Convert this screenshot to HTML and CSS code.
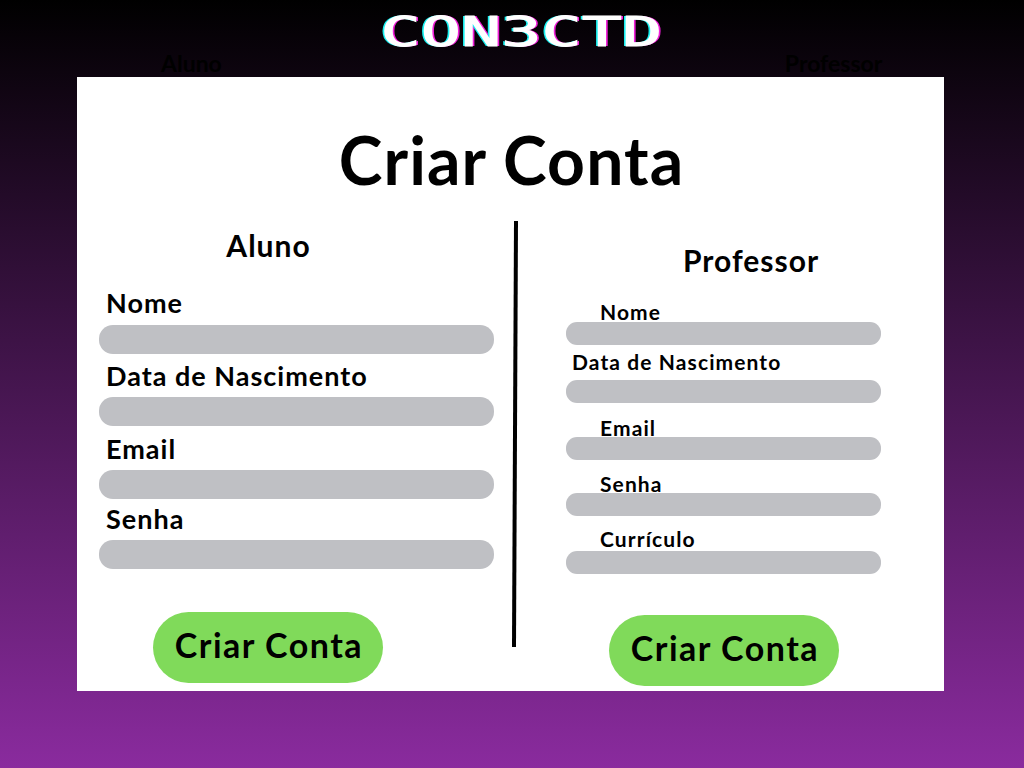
FILE: index.html
```html
<!DOCTYPE html>
<html lang="pt">
<head>
<meta charset="utf-8">
<title>CON3CTD - Criar Conta</title>
<link rel="stylesheet" href="styles.css">
</head>
<body>
<header class="top">
  <h2 class="logo"><span class="logo-text">CON3CTD</span></h2>
  <div class="tabs">
    <span class="tab tab-a">Aluno</span>
    <span class="tab tab-p">Professor</span>
  </div>
</header>
<main class="card">
  <h1 class="title">Criar Conta</h1>
  <div class="columns">
    <form class="form form-a">
      <h3 class="form-title">Aluno</h3>
      <label class="field"><span class="field-label">Nome</span><span class="input"></span></label>
      <label class="field"><span class="field-label">Data de Nascimento</span><span class="input"></span></label>
      <label class="field"><span class="field-label">Email</span><span class="input"></span></label>
      <label class="field"><span class="field-label">Senha</span><span class="input"></span></label>
      <button class="submit" type="button">Criar Conta</button>
    </form>
    <div class="divider"></div>
    <form class="form form-p">
      <h3 class="form-title">Professor</h3>
      <label class="field"><span class="field-label">Nome</span><span class="input"></span></label>
      <label class="field field-wide"><span class="field-label">Data de Nascimento</span><span class="input"></span></label>
      <label class="field"><span class="field-label">Email</span><span class="input"></span></label>
      <label class="field"><span class="field-label">Senha</span><span class="input"></span></label>
      <label class="field"><span class="field-label">Currículo</span><span class="input"></span></label>
      <button class="submit" type="button">Criar Conta</button>
    </form>
  </div>
</main>
</body>
</html>
```
FILE: styles.css
```css
* { box-sizing: border-box; margin: 0; padding: 0; }
html, body { height: 100%; }
body {
  width: 1024px;
  height: 768px;
  overflow: hidden;
  background: linear-gradient(180deg, #000000 0%, #8a2b9e 100%);
  font-family: "Lato", "Liberation Sans", sans-serif;
  color: #000;
  display: flex;
  flex-direction: column;
}
.top { height: 77px; display: flex; flex-direction: column; }
.logo { height: 53px; padding-top: 9px; display: flex; justify-content: center; }
.logo-text {
  display: block;
  font-family: "DejaVu Sans Mono", monospace;
  font-weight: 400;
  font-size: 41px;
  line-height: 46px;
  letter-spacing: 0;
  color: #fff;
  -webkit-text-stroke: 1px #fff;
  transform: translateX(9px) scaleX(1.63);
  text-shadow: -1.5px 0 0 #19f0f0, 1.5px 0 0 #f01fd8;
}
.tabs { display: flex; height: 24px; padding-left: 161px; font-size: 23px; line-height: 20px; font-weight: 700; }
.tab-p { margin-left: 563px; }
.card {
  width: 867px;
  height: 614px;
  margin-left: 77px;
  background: #fff;
  padding: 0 22px;
}
.title {
  height: 145px;
  padding-top: 44px;
  padding-left: 2px;
  text-align: center;
  font-size: 66px;
  line-height: 77px;
  letter-spacing: 1.1px;
  font-weight: 700;
}
.columns { display: flex; height: 469px; }
.form { display: flex; flex-direction: column; align-items: flex-start; }
.form-a { width: 395px; }
.form-p { width: 315px; margin-left: 49px; }
.divider {
  width: 4px;
  height: 426px;
  margin-left: 19px;
  margin-top: -1px;
  background: #000;
  transform: rotate(0.27deg);
}
.form-title {
  align-self: stretch;
  height: 48px;
  font-size: 30px;
  line-height: 46px;
  letter-spacing: 1px;
  font-weight: 700;
  text-align: center;
  white-space: nowrap;
}
.form-a .form-title { margin-right: 56px; margin-bottom: 18px; }
.form-p .form-title { margin-top: 15px; margin-bottom: 15px; margin-left: 117px; margin-right: 149px; }
.field { display: flex; flex-direction: column; align-self: stretch; }
.field-label { font-weight: 700; white-space: nowrap; letter-spacing: 1px; }
.input { display: block; background: #bfc0c4; }

.form-a .field-label { font-size: 27px; line-height: 30px; height: 30px; padding-left: 7px; }
.form-a .input { height: 29px; border-radius: 14px; margin-top: 6px; }
.form-a .field:nth-of-type(1) .input { margin-top: 7px; }
.form-a .field:nth-of-type(2) { margin-top: 7px; }
.form-a .field:nth-of-type(3) { margin-top: 8px; }
.form-a .field:nth-of-type(4) { margin-top: 5px; }

.form-p .field-label { font-size: 21px; line-height: 24px; height: 22px; padding-left: 34px; letter-spacing: 1.1px; }
.form-p .field-wide .field-label { padding-left: 6px; }
.form-p .input { height: 23px; border-radius: 11px; margin-top: -1px; }
.form-p .field:nth-of-type(1) .input { margin-top: 0; }
.form-p .field:nth-of-type(2) { margin-top: 5px; }
.form-p .field:nth-of-type(2) .input { margin-top: 8px; }
.form-p .field:nth-of-type(3) { margin-top: 13px; }
.form-p .field:nth-of-type(4) { margin-top: 12px; }
.form-p .field:nth-of-type(5) { margin-top: 11px; }
.form-p .field:nth-of-type(5) .input { margin-top: 2px; }

.submit {
  width: 230px;
  height: 71px;
  border: 0;
  border-radius: 36px;
  padding-bottom: 5px;
  padding-left: 2px;
  background: #80da5a;
  font: 700 34px/66px "Lato", "Liberation Sans", sans-serif;
  letter-spacing: 1.5px;
  color: #000;
}
.form-a .submit { margin-top: 43px; margin-left: 54px; }
.form-p .submit { margin-top: 41px; margin-left: 43px; }
```
